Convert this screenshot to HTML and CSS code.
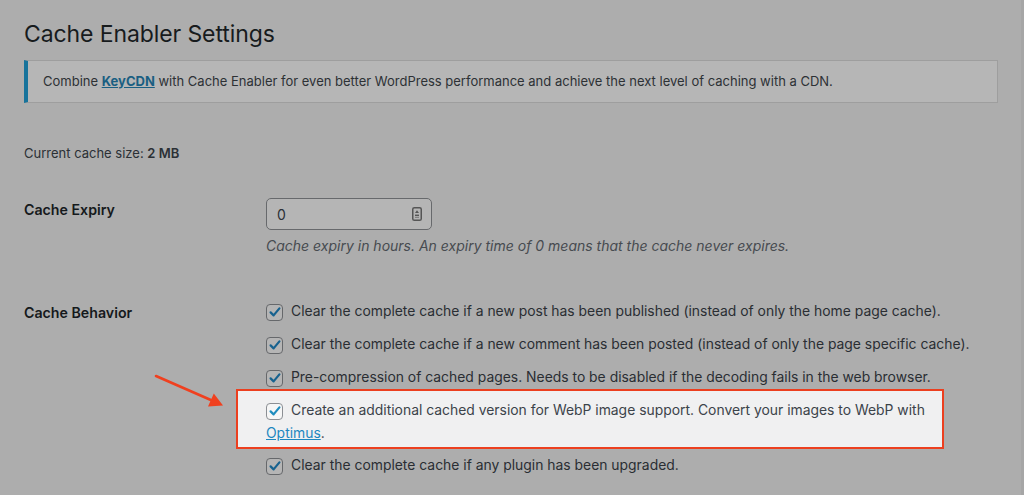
FILE: index.html
```html
<!DOCTYPE html>
<html>
<head>
<meta charset="utf-8">
<link rel="stylesheet" href="styles.css">
</head>
<body>
<div class="screen">
  <div class="wrap">
    <h1 class="title">Cache Enabler Settings</h1>
    <div class="notice">Combine <a class="notice-link" href="#">KeyCDN</a> with Cache Enabler for even better WordPress performance and achieve the next level of caching with a CDN.</div>
    <p class="cache-size">Current cache size: <b>2 MB</b></p>

    <div class="setting setting-expiry">
      <div class="label label-expiry">Cache Expiry</div>
      <div class="field">
        <div class="number-input">
          <span class="number-value">0</span>
          <svg class="spin" width="10" height="14" viewBox="0 0 10 14">
            <rect x="0.75" y="0.75" width="8.5" height="12.5" rx="1.6" fill="none" stroke="#555" stroke-width="1.5"/>
            <path d="M5 3.2 L7 6 L3 6 Z" fill="#555"/>
            <rect x="3" y="7.6" width="4" height="1.4" fill="#555"/>
            <rect x="3" y="9.8" width="4" height="1" fill="#777"/>
          </svg>
        </div>
        <p class="description">Cache expiry in hours. An expiry time of 0 means that the cache never expires.</p>
      </div>
    </div>

    <div class="setting setting-behavior">
      <div class="label label-behavior">Cache Behavior</div>
      <div class="field">
        <div class="option"><span class="cb"><svg width="14" height="14" viewBox="0 0 14 14"><path d="M2.6 7.4 L5.6 10.4 L11.4 3.4" fill="none" stroke="currentColor" stroke-width="2.2" stroke-linecap="round" stroke-linejoin="round"/></svg></span>Clear the complete cache if a new post has been published (instead of only the home page cache).</div>
        <div class="option"><span class="cb"><svg width="14" height="14" viewBox="0 0 14 14"><path d="M2.6 7.4 L5.6 10.4 L11.4 3.4" fill="none" stroke="currentColor" stroke-width="2.2" stroke-linecap="round" stroke-linejoin="round"/></svg></span>Clear the complete cache if a new comment has been posted (instead of only the page specific cache).</div>
        <div class="option"><span class="cb"><svg width="14" height="14" viewBox="0 0 14 14"><path d="M2.6 7.4 L5.6 10.4 L11.4 3.4" fill="none" stroke="currentColor" stroke-width="2.2" stroke-linecap="round" stroke-linejoin="round"/></svg></span>Pre-compression of cached pages. Needs to be disabled if the decoding fails in the web browser.</div>
        <div class="highlight">
          <div class="option option-hl"><span class="cb cb-hl"><svg width="14" height="14" viewBox="0 0 14 14"><path d="M2.6 7.4 L5.6 10.4 L11.4 3.4" fill="none" stroke="currentColor" stroke-width="2.2" stroke-linecap="round" stroke-linejoin="round"/></svg></span>Create an additional cached version for WebP image support. Convert your images to WebP with <a class="hl-link" href="#">Optimus</a>.</div>
        </div>
        <div class="option option-last"><span class="cb"><svg width="14" height="14" viewBox="0 0 14 14"><path d="M2.6 7.4 L5.6 10.4 L11.4 3.4" fill="none" stroke="currentColor" stroke-width="2.2" stroke-linecap="round" stroke-linejoin="round"/></svg></span>Clear the complete cache if any plugin has been upgraded.</div>
      </div>
    </div>

    <svg class="arrow" width="80" height="40" viewBox="150 370 80 40">
      <line x1="156" y1="376" x2="212" y2="400.5" stroke="#f0401f" stroke-width="2.6" stroke-linecap="round"/>
      <polygon points="223,405.5 208,406.5 213.8,393.5" fill="#f0401f"/>
    </svg>
  </div>
  <div class="scroll-strip"></div>
</div>
</body>
</html>
```
FILE: styles.css
```css
* { box-sizing: border-box; }
html, body { margin: 0; padding: 0; }
body {
  background: #adadad;
  font-family: "Inter", "Liberation Sans", sans-serif;
  font-size: 13px;
  color: #2b3035;
  overflow: hidden;
}
.screen {
  display: flex;
  width: 1024px;
  height: 495px;
}
.wrap {
  position: relative;
  flex: 1;
  padding: 20px 0 0 24px;
}
.scroll-strip {
  width: 3px;
  background: #a6a6a6;
}
.title {
  margin: 0;
  font-size: 23px;
  font-weight: 400;
  line-height: 29px;
  color: #171b1d;
  letter-spacing: -0.1px;
}
.notice {
  margin-top: 11px;
  width: 974px;
  background: #b6b6b6;
  border: 1px solid #9e9e9e;
  border-left: 4px solid #17739b;
  padding: 11px 15px;
  line-height: 19px;
  font-size: 13px;
  color: #2d3135;
}
.notice-link {
  color: #1a5f82;
  font-weight: 700;
  text-decoration: underline;
}
.cache-size {
  margin: 40px 0 0;
  line-height: 20px;
  color: #2b3035;
}
.cache-size b { font-weight: 600; }
.setting {
  display: flex;
}
.setting-expiry { margin-top: 35px; }
.setting-behavior { margin-top: 44px; }
.label {
  width: 242px;
  flex: none;
  font-weight: 600;
  font-size: 14.2px;
  line-height: 20px;
  color: #15191c;
}
.label-expiry { padding-top: 2px; }
.label-behavior { padding-top: 3px; }
.field { flex: 1; }
.number-input {
  width: 166px;
  height: 32px;
  border: 1px solid #67696c;
  border-radius: 5px;
  background: #b5b5b5;
  display: flex;
  align-items: center;
  justify-content: space-between;
  padding: 0 9px 0 10px;
}
.number-value {
  font-size: 14px;
  color: #2b3035;
}
.description {
  margin: 6px 0 0;
  line-height: 20px;
  font-size: 14px;
  font-style: italic;
  color: #474b50;
}
.option {
  line-height: 23px;
  margin-bottom: 10px;
  font-size: 13.9px;
  color: #2a2e33;
  white-space: nowrap;
}
.option-hl {
  white-space: normal;
  width: 670px;
  margin: 0;
  color: #3c434a;
}
.option-last { margin-top: 5px; }
.cb {
  display: inline-flex;
  align-items: center;
  justify-content: center;
  width: 17px;
  height: 17px;
  border: 1px solid #66686b;
  border-radius: 4px;
  background: #b5b5b5;
  color: #17628f;
  vertical-align: -3px;
  margin-right: 8px;
}
.cb-hl {
  background: #f6f6f6;
  border-color: #8c8f94;
  color: #1e8cbe;
}
.highlight {
  margin: -10px 0 0 -30px;
  width: 708px;
  height: 60px;
  background: #f0f0f1;
  border: 2px solid #ec3f1f;
  padding: 8px 0 0 28px;
}
.hl-link {
  color: #1d87c0;
  text-decoration: underline;
}
.arrow {
  position: absolute;
  left: 150px;
  top: 370px;
}
```
